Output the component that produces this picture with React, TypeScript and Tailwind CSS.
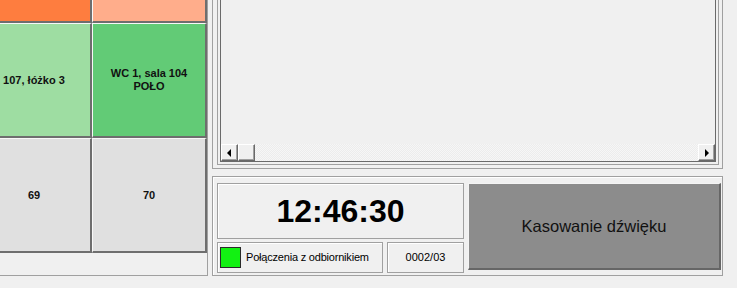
const cellBorder =
  'border-l border-t border-l-[#f8f8f8] border-t-[#f8f8f8] border-r-2 border-b-2 border-r-[#6e6e6e] border-b-[#6e6e6e]';

type Cell = { bg: string; lines: string[] };

const cells: Cell[] = [
  { bg: 'bg-[#fe7d3f]', lines: [] },
  { bg: 'bg-[#ffad8b]', lines: [] },
  { bg: 'bg-[#9edda2]', lines: ['107, łóżko 3'] },
  { bg: 'bg-[#62cb76]', lines: ['WC 1, sala 104', 'POŁO'] },
  { bg: 'bg-[#e0e0e0]', lines: ['69'] },
  { bg: 'bg-[#e0e0e0]', lines: ['70'] },
];

function ScrollButton({ dir }: { dir: 'left' | 'right' }) {
  return (
    <div className="w-[17px] h-[17px] shrink-0 bg-[#f0f0f0] border-t border-l border-white border-r border-b border-r-[#696969] border-b-[#696969] shadow-[inset_-1px_-1px_0_#a0a0a0] flex items-center justify-center">
      <svg width="5" height="8" viewBox="0 0 5 8">
        {dir === 'left' ? (
          <path d="M4 0 L0 4 L4 8 Z" fill="#000" />
        ) : (
          <path d="M1 0 L5 4 L1 8 Z" fill="#000" />
        )}
      </svg>
    </div>
  );
}

export default function App() {
  return (
    <div className="w-[737px] h-[288px] bg-[#f0f0f0] overflow-hidden flex font-['Liberation_Sans',Arial,sans-serif] text-black">
      {/* left grid panel */}
      <div className="w-[208px] h-[276px] shrink-0 border-r border-b border-[#a0a0a0] overflow-hidden">
        <div className="-mt-[92px] -ml-[23px] grid grid-cols-[115px_115px] grid-rows-[115px_115px_115px]">
          {cells.map((c, i) => (
            <div
              key={i}
              className={`${cellBorder} ${c.bg} flex flex-col items-center justify-center text-[11px] font-bold leading-[13px] text-[#111] whitespace-nowrap`}
            >
              {c.lines.map((l) => (
                <span key={l}>{l}</span>
              ))}
            </div>
          ))}
        </div>
      </div>

      {/* right side */}
      <div className="flex flex-col">
        {/* list panel */}
        <div className="ml-[4px] w-[511px] h-[169px] border-x border-b border-[#a0a0a0] pl-[4px] pr-[3px] pb-[3px] flex">
          <div className="flex-1 border-x border-b border-[#a0a0a0] p-[2px] pt-0 flex">
            <div className="flex-1 border-x border-b border-[#6a6a6a] flex flex-col justify-end">
              <div className="h-[17px] flex bg-[repeating-conic-gradient(#f6f6f6_0_25%,#ececec_0_50%)] bg-[length:2px_2px]">
                <ScrollButton dir="left" />
                <div className="w-[17px] h-[17px] bg-[#f0f0f0] border-t border-l border-white border-r border-b border-r-[#696969] border-b-[#696969] shadow-[inset_-1px_-1px_0_#a0a0a0]" />
                <div className="flex-1" />
                <ScrollButton dir="right" />
              </div>
            </div>
          </div>
        </div>

        {/* bottom panel */}
        <div className="mt-[7px] ml-[4px] w-[511px] h-[100px] border border-[#a0a0a0] shadow-[inset_1px_1px_0_#fff] pl-[4px] pt-[6px] flex gap-[4px]">
          <div className="w-[247px] flex flex-col gap-[3px]">
            <div className="h-[56px] border border-[#a0a0a0] shadow-[inset_1px_1px_0_#fff] flex items-center justify-center text-[32px] font-bold leading-none">
              12:46:30
            </div>
            <div className="h-[31px] flex gap-[4px] text-[11px]">
              <div className="w-[166px] border border-[#a0a0a0] shadow-[inset_1px_1px_0_#fff] flex items-center pl-[2px] gap-[5px]">
                <div className="w-[21px] h-[21px] bg-[#12f112] border border-[#2a2a2a]" />
                <span className="tracking-[-0.2px]">Połączenia z odbiornikiem</span>
              </div>
              <div className="w-[77px] border border-[#a0a0a0] shadow-[inset_1px_1px_0_#fff] flex items-center justify-center">
                0002/03
              </div>
            </div>
          </div>
          <div className="w-[253px] h-[87px] bg-[#8c8c8c] border-t border-l border-[#f4f4f4] border-r-2 border-b-2 border-r-[#666] border-b-[#666] flex items-center justify-center text-[16.5px] text-[#111]">
            Kasowanie dźwięku
          </div>
        </div>
      </div>
    </div>
  );
}
